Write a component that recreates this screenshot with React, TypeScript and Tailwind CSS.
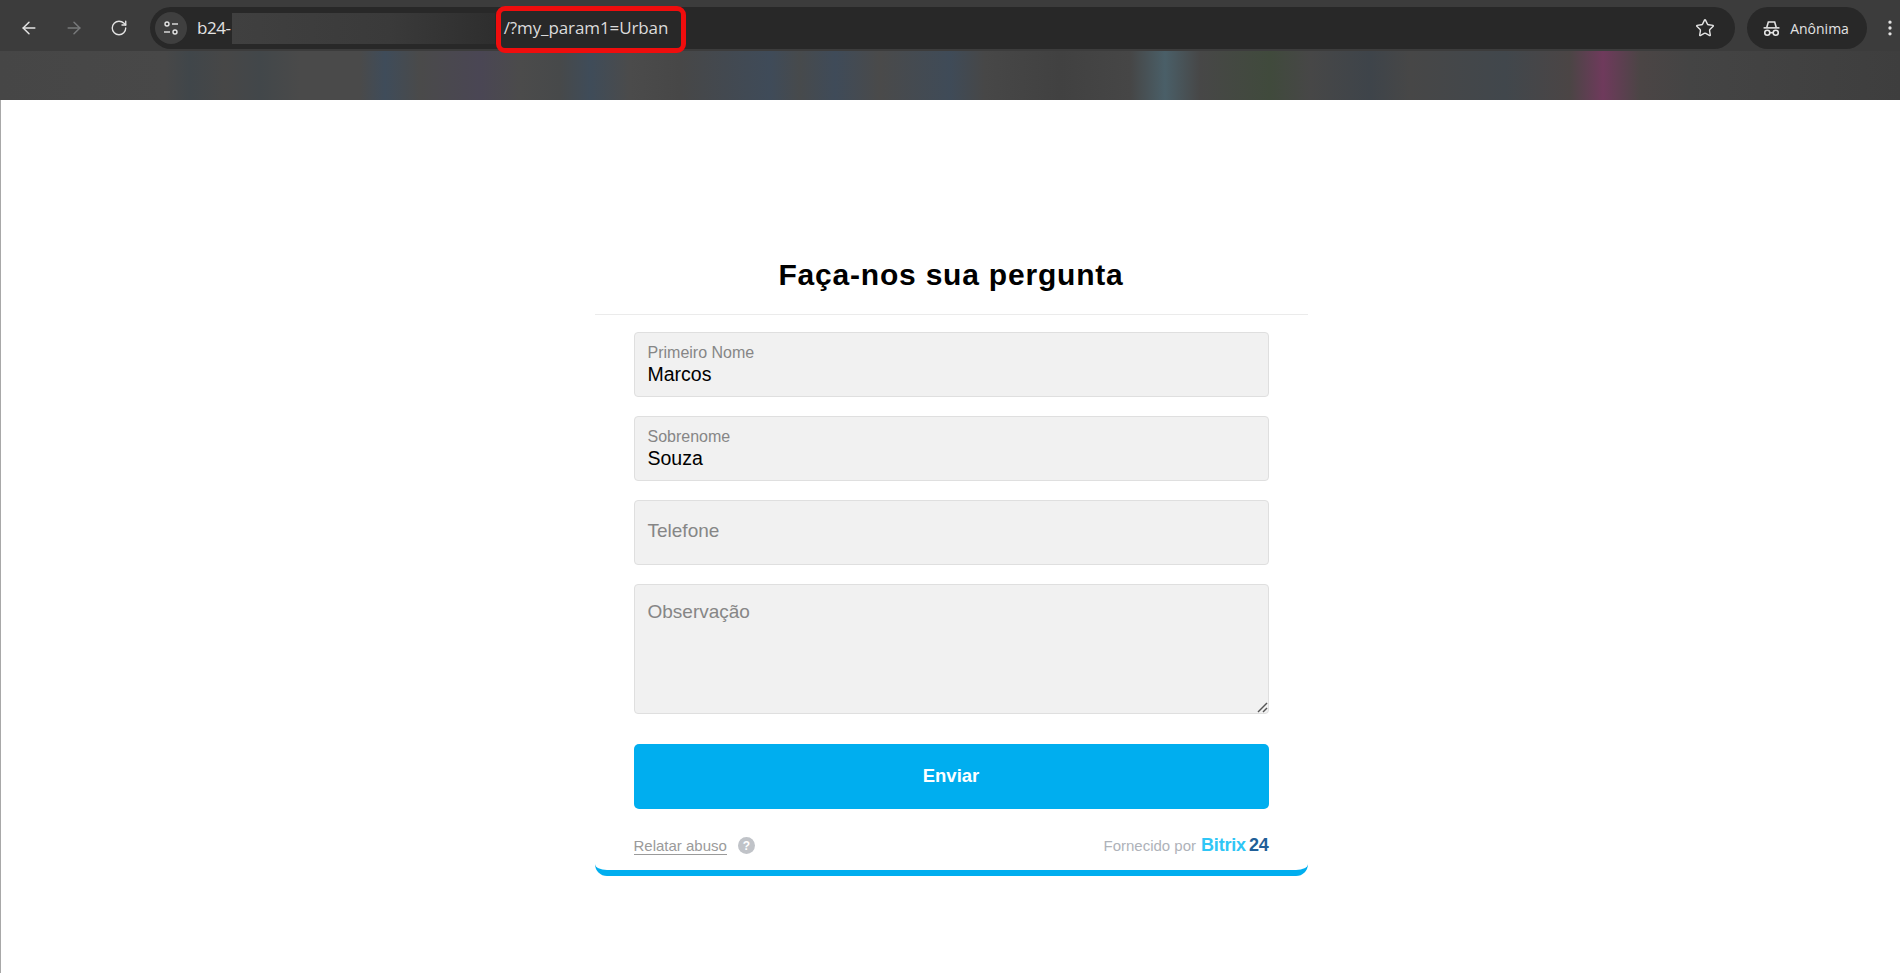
import { ArrowLeft, ArrowRight, RotateCw, Star, MoreVertical } from "lucide-react"

const arial = "font-['Liberation_Sans',Arial,sans-serif]"

function TuneIcon() {
    return (
        <svg width="16" height="16" viewBox="0 0 16 16" fill="none" stroke="#e3e3e3" strokeWidth="1.4">
            <circle cx="4" cy="4" r="2" />
            <path d="M9 4h6" />
            <path d="M1 12h6" />
            <circle cx="12" cy="12" r="2" />
        </svg>
    )
}

function IncognitoIcon() {
    return (
        <svg width="19" height="19" viewBox="0 0 18 18" fill="none" stroke="#e3e3e3" strokeWidth="1.5">
            <path d="M4.5 8 6 2.8h6L13.5 8" />
            <path d="M1.5 8.4h15" />
            <circle cx="5" cy="13" r="2.4" />
            <circle cx="13" cy="13" r="2.4" />
            <path d="M7.4 13h3.2" />
        </svg>
    )
}

function BrowserBar() {
    return (
        <div className="bg-[#3c3c3c]">
            <div className="h-[51px] flex items-center pl-[19px] pt-[5px] relative">
                <ArrowLeft size={20} color="#e3e3e3" strokeWidth={1.8} />
                <ArrowRight size={20} color="#77797a" strokeWidth={1.8} className="ml-[25px]" />
                <RotateCw size={18} color="#e3e3e3" strokeWidth={1.8} className="ml-[26px]" />
                <div className="ml-[22px] w-[1587px] h-[42px] rounded-full bg-[#282828] flex items-center pl-[5px] pr-[20px]">
                    <div className="w-[32px] h-[32px] rounded-full bg-[#3f3f3f] flex items-center justify-center">
                        <TuneIcon />
                    </div>
                    <span className="ml-[10px] text-[17px] text-[#e3e3e3] font-['Open_Sans',sans-serif] tracking-[-0.4px]">b24-</span>
                    <div className="ml-[1px] w-[263px] h-[31px] bg-[linear-gradient(90deg,#404040,#3a3a3a_60%,#2e2e2e)]"></div>
                    <span className="ml-[9px] text-[17px] text-[#dcdcdc] font-['Open_Sans',sans-serif] tracking-[-0.1px]">/?my_param1=Urban</span>
                    <Star size={20} color="#e3e3e3" strokeWidth={1.7} className="ml-auto" />
                </div>
                <div className="ml-[12px] w-[120px] h-[42px] rounded-full bg-[#282828] flex items-center pl-[15px] gap-[9px]">
                    <IncognitoIcon />
                    <span className="text-[14px] text-[#e3e3e3] font-['Open_Sans',sans-serif]">Anônima</span>
                </div>
                <MoreVertical size={20} color="#e3e3e3" className="ml-[13px]" />
                <div className="absolute left-[496px] top-[6px] w-[190px] h-[47px] border-[5px] border-[#f00d0d] rounded-[9px]"></div>
            </div>
            <div className="h-[49px] bg-[linear-gradient(90deg,#464646_0,#484848_165px,#40464a_190px,#474747_225px,#42474a_260px,#4a4a4a_300px,#4a4a4a_360px,#3f4c5a_385px,#4a4a4a_420px,#4a4654_480px,#4b4b4b_520px,#47494a_560px,#3f4c59_590px,#4b4b4b_630px,#474747_680px,#3f4b59_770px,#474a4c_800px,#3f4b59_835px,#4a4a4a_880px,#3f4b58_950px,#474747_985px,#414141_1060px,#464646_1130px,#4a5f68_1165px,#474747_1200px,#404a3c_1270px,#474747_1310px,#3e444a_1370px,#474747_1410px,#41474c_1505px,#4b4545_1570px,#6f3a5c_1603px,#4b4545_1640px,#444444_1690px,#3e3e3e_1900px)]"></div>
        </div>
    )
}

function FilledField({ label, value }: { label: string; value: string }) {
    return (
        <div className="h-[65px] rounded-[4px] border border-[#dfdfdf] bg-[#f1f1f1] px-[13px] pt-[11px]">
            <div className="text-[16px] leading-[18px] text-[#868686]">{label}</div>
            <div className="text-[19.5px] leading-[24px] text-black">{value}</div>
        </div>
    )
}

export default function App() {
    return (
        <div className={`h-screen overflow-hidden bg-white flex flex-col ${arial}`}>
            <BrowserBar />
            <div className="flex-1 border-l border-[#a8a8a8] flex justify-center pt-[154px]">
                <div className="w-[713px] h-[622px] ml-[1px] mb-auto rounded-b-[12px] border-b-[6px] border-[#00aeef]">
                    <div className="h-[61px] border-b border-[#ebebeb] text-center text-[30px] font-bold tracking-[0.8px] leading-[42px] text-black">
                        Faça-nos sua pergunta
                    </div>
                    <div className="px-[39px] pt-[17px]">
                        <div className="flex flex-col gap-[19px]">
                            <FilledField label="Primeiro Nome" value="Marcos" />
                            <FilledField label="Sobrenome" value="Souza" />
                            <div className="h-[65px] rounded-[4px] border border-[#dfdfdf] bg-[#f1f1f1] px-[13px] pb-[2px] flex items-center text-[19px] text-[#868686]">
                                Telefone
                            </div>
                            <div className="relative">
                                <textarea
                                    placeholder="Observação"
                                    className="block w-full h-[130px] resize-none rounded-[4px] border border-[#dfdfdf] bg-[#f1f1f1] px-[13px] py-[15px] text-[19px] leading-[24px] placeholder:text-[#868686] outline-none"
                                />
                                <svg width="11" height="11" viewBox="0 0 11 11" stroke="#555555" strokeWidth="1.4" className="absolute right-[1px] bottom-[1px]">
                                    <path d="M1 10 10 1" />
                                    <path d="M6 10l4-4" />
                                </svg>
                            </div>
                        </div>
                        <button className="mt-[30px] w-full h-[65px] pb-[2px] rounded-[5px] bg-[#00aeef] text-white text-[18.5px] font-bold">
                            Enviar
                        </button>
                        <div className="mt-[24px] h-[26px] flex items-center">
                            <span className="mb-[1px] text-[15px] leading-[17px] text-[#9a9a9a] border-b border-[#9a9a9a]">Relatar abuso</span>
                            <span className="ml-[11px] mb-[1px] w-[17px] h-[17px] rounded-full bg-[#c0c3c8] text-white text-[12px] font-bold flex items-center justify-center">?</span>
                            <span className="ml-auto text-[15px] text-[#aeb2b9]">Fornecido por</span>
                            <span className="ml-[5px] mb-[2px] text-[18px] font-bold text-[#2fc6f6] tracking-[-0.2px]">Bitrix</span>
                            <span className="ml-[3px] mb-[2px] text-[18px] font-bold text-[#215f98] tracking-[-0.2px]">24</span>
                        </div>
                    </div>
                </div>
            </div>
        </div>
    )
}
